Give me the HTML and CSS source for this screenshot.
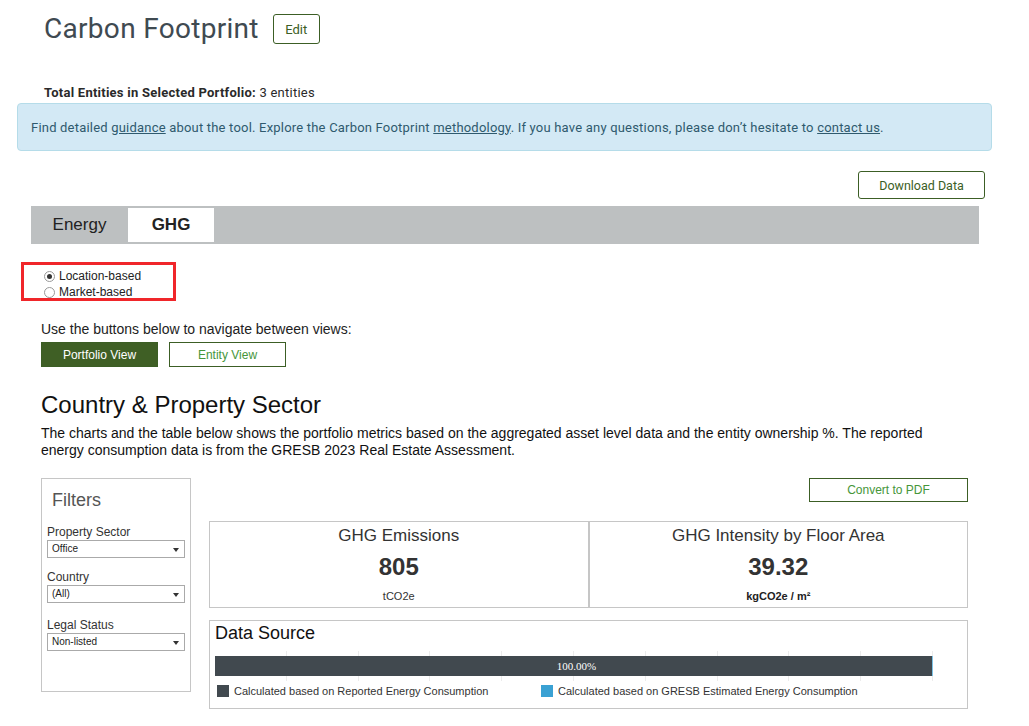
FILE: index.html
```html
<!DOCTYPE html>
<html lang="en">
<head>
  <meta charset="UTF-8" />
  <title>Carbon Footprint</title>
  <link rel="stylesheet" href="styles.css">
</head>
<body>
  <div class="page">
    <div class="page-header">
      <h1>Carbon Footprint</h1>
      <button class="btn-edit">Edit</button>
    </div>

    <div class="total-entities"><b>Total Entities in Selected Portfolio:</b> 3 entities</div>

    <div class="info-box">
      <span>Find detailed <a href="#">guidance</a> about the tool. Explore the Carbon Footprint <a href="#">methodology</a>. If you have any questions, please don’t hesitate to <a href="#">contact us</a>.</span>
    </div>

    <div class="download-row">
      <button class="btn-download">Download Data</button>
    </div>

    <div class="tabs">
      <div class="tab">Energy</div>
      <div class="tab active">GHG</div>
    </div>

    <div class="radio-box">
      <div class="radio-item"><span class="radio checked"></span>Location-based</div>
      <div class="radio-item"><span class="radio"></span>Market-based</div>
    </div>

    <div class="dashboard">
      <p class="nav-hint">Use the buttons below to navigate between views:</p>
      <div class="view-buttons">
        <button class="btn-view active">Portfolio View</button>
        <button class="btn-view">Entity View</button>
      </div>

      <h2>Country &amp; Property Sector</h2>
      <p class="desc">The charts and the table below shows the portfolio metrics based on the aggregated asset level data and the entity ownership %. The reported energy consumption data is from the GRESB 2023 Real Estate Assessment.</p>

      <div class="dash-body">
        <div class="filters">
          <div class="filters-title">Filters</div>
          <div class="filter">
            <div class="filter-label">Property Sector</div>
            <div class="select">Office<span class="caret"></span></div>
          </div>
          <div class="filter">
            <div class="filter-label">Country</div>
            <div class="select">(All)<span class="caret"></span></div>
          </div>
          <div class="filter last">
            <div class="filter-label">Legal Status</div>
            <div class="select">Non-listed<span class="caret"></span></div>
          </div>
        </div>

        <div class="charts">
          <div class="pdf-row">
            <button class="btn-pdf">Convert to PDF</button>
          </div>
          <div class="kpis">
            <div class="kpi">
              <div class="kpi-title">GHG Emissions</div>
              <div class="kpi-value">805</div>
              <div class="kpi-unit">tCO2e</div>
            </div>
            <div class="kpi">
              <div class="kpi-title">GHG Intensity by Floor Area</div>
              <div class="kpi-value">39.32</div>
              <div class="kpi-unit bold">kgCO2e / m²</div>
            </div>
          </div>
          <div class="data-source">
            <div class="ds-title">Data Source</div>
            <div class="ds-chart">
              <div class="grid">
                <span></span><span></span><span></span><span></span><span></span>
                <span></span><span></span><span></span><span></span><span></span>
              </div>
              <div class="bar">
                <div class="bar-reported">100.00%</div>
                <div class="bar-estimated"></div>
              </div>
            </div>
            <div class="legend">
              <div class="legend-item"><span class="swatch dark"></span>Calculated based on Reported Energy Consumption</div>
              <div class="legend-item"><span class="swatch blue"></span>Calculated based on GRESB Estimated Energy Consumption</div>
            </div>
          </div>
        </div>
      </div>
    </div>
  </div>
</body>
</html>
```

FILE: styles.css
```css
* {
  box-sizing: border-box;
}

html, body {
  margin: 0;
  padding: 0;
  background: #fff;
  font-family: "Liberation Sans", Arial, sans-serif;
  color: #222;
}

button {
  font-family: inherit;
  background: #fff;
  cursor: pointer;
}

.page {
  width: 1029px;
  height: 726px;
  overflow: hidden;
}

/* header */
.page-header {
  display: flex;
  align-items: center;
  gap: 14px;
  padding: 14px 0 0 44px;
  height: 44px;
}

h1 {
  margin: 0;
  font-family: Roboto, "DejaVu Sans", sans-serif;
  font-weight: 400;
  font-size: 28px;
  letter-spacing: 0.3px;
  color: #3f4a51;
  line-height: 30px;
}

.btn-edit {
  height: 30px;
  width: 47px;
  border: 1px solid #3c5e25;
  border-radius: 3px;
  color: #3c5e25;
  font-family: Roboto, sans-serif;
  font-size: 13px;
  padding: 0;
}

.total-entities {
  margin: 42px 0 0 44px;
  font-family: Roboto, sans-serif;
  font-size: 13px;
  letter-spacing: 0.25px;
  line-height: 14px;
  color: #2a2a2a;
}

.info-box {
  margin: 3px 37px 0 17px;
  height: 48px;
  padding: 0 13px;
  display: flex;
  align-items: center;
  background: #d3e9f5;
  border: 1px solid #b5dce9;
  border-radius: 4px;
  font-family: Roboto, sans-serif;
  font-size: 13px;
  letter-spacing: 0.2px;
  color: #2f5a6e;
}

.info-box a {
  color: #2f5a6e;
  text-decoration: underline;
}

.download-row {
  display: flex;
  justify-content: flex-end;
  margin: 20px 44px 0 0;
}

.btn-download {
  width: 127px;
  height: 28px;
  border: 1px solid #3c5e25;
  border-radius: 3px;
  color: #3c5e25;
  font-family: Roboto, sans-serif;
  font-size: 12.5px;
  padding: 0;
}

/* tabs */
.tabs {
  display: flex;
  margin: 7px 50px 0 31px;
  height: 38px;
  background: #bdc0c1;
}

.tab {
  width: 97px;
  display: flex;
  align-items: center;
  justify-content: center;
  font-size: 17px;
  color: #222;
}

.tab.active {
  width: 86px;
  background: #fff;
  font-weight: bold;
  border-top: 2px solid #bdc0c1;
  border-bottom: 2px solid #bdc0c1;
}

/* red outlined radios */
.radio-box {
  margin: 18px 0 0 21px;
  width: 155px;
  height: 39px;
  border: 3px solid #f0262a;
  padding: 3px 0 0 20px;
}

.radio-item {
  display: flex;
  align-items: center;
  height: 16px;
  font-size: 12px;
  color: #222;
}

.radio {
  width: 11px;
  height: 11px;
  border: 1px solid #999;
  border-radius: 50%;
  margin-right: 4px;
  display: flex;
  align-items: center;
  justify-content: center;
  background: #fff;
}

.radio.checked::after {
  content: "";
  width: 5px;
  height: 5px;
  border-radius: 50%;
  background: #333;
}

/* dashboard */
.dashboard {
  padding: 20px 61px 0 41px;
}

.nav-hint {
  margin: 0;
  font-size: 14px;
  line-height: 16px;
  color: #222;
}

.view-buttons {
  display: flex;
  gap: 11px;
  margin-top: 5px;
}

.btn-view {
  width: 117px;
  height: 25px;
  border: 1px solid #3c5e25;
  color: #46963a;
  font-size: 12px;
  padding: 0;
}

.btn-view.active {
  background: #3f5f25;
  color: #fff;
}

h2 {
  margin: 24px 0 0 0;
  font-weight: 400;
  font-size: 24px;
  line-height: 28px;
  color: #111;
}

.desc {
  margin: 6px 0 0 0;
  font-size: 14px;
  line-height: 17px;
  color: #111;
}

.dash-body {
  display: flex;
  gap: 18px;
  margin-top: 19px;
}

.filters {
  width: 150px;
  height: 214px;
  border: 1px solid #c6c6c6;
  padding: 0 5px;
}

.filters-title {
  font-size: 18px;
  color: #555;
  margin: 10px 0 0 5px;
  line-height: 22px;
}

.filter {
  margin-top: 14px;
}

.filter + .filter {
  margin-top: 12px;
}

.filter.last {
  margin-top: 15px;
}

.filter-label {
  font-size: 12px;
  line-height: 14px;
  color: #333;
}

.select {
  position: relative;
  height: 18px;
  border: 1px solid #aaa;
  font-size: 10px;
  line-height: 16px;
  padding-left: 4px;
  color: #222;
  margin-top: 1px;
}

.caret {
  position: absolute;
  right: 5px;
  top: 7px;
  border-left: 3px solid transparent;
  border-right: 3px solid transparent;
  border-top: 4px solid #333;
}

.charts {
  width: 759px;
}

.pdf-row {
  display: flex;
  justify-content: flex-end;
}

.btn-pdf {
  width: 159px;
  height: 24px;
  border: 1px solid #3c5e25;
  color: #46963a;
  font-size: 12px;
  padding: 0;
}

.kpis {
  display: flex;
  margin-top: 19px;
  height: 87px;
  border: 1px solid #c6c6c6;
}

.kpi {
  flex: 1;
  text-align: center;
  color: #333;
}

.kpi + .kpi {
  border-left: 2px solid #c6c6c6;
}

.kpi-title {
  font-size: 17px;
  margin-top: 4px;
  line-height: 20px;
}

.kpi-value {
  font-size: 24px;
  font-weight: bold;
  margin-top: 7px;
  line-height: 28px;
}

.kpi-unit {
  font-size: 11px;
  margin-top: 9px;
  line-height: 13px;
}

.kpi-unit.bold {
  font-weight: bold;
  color: #222;
}

.data-source {
  margin-top: 12px;
  height: 89px;
  border: 1px solid #c6c6c6;
  padding: 0 5px;
}

.ds-title {
  font-size: 18px;
  color: #111;
  margin: 1px 0 0 0;
  line-height: 22px;
}

.ds-chart {
  position: relative;
  width: 718px;
  height: 30px;
  margin-top: 7px;
}

.grid {
  position: absolute;
  inset: 0;
  display: flex;
}

.grid span {
  flex: 1;
  border-right: 1px solid #ececec;
}

.bar {
  position: absolute;
  left: 0;
  right: 0;
  top: 5px;
  height: 20px;
  display: flex;
}

.bar-reported {
  flex: 1;
  background: #41494f;
  color: #fff;
  font-family: "Liberation Serif", serif;
  font-size: 11px;
  line-height: 20px;
  text-align: center;
  padding-left: 6px;
}

.bar-estimated {
  width: 1px;
  background: #7cc3e6;
}

.legend {
  display: flex;
  margin-top: 4px;
  padding-left: 2px;
}

.legend-item {
  display: flex;
  align-items: center;
  font-size: 11px;
  color: #333;
  width: 324px;
}

.swatch {
  width: 12px;
  height: 12px;
  margin-right: 5px;
}

.swatch.dark {
  background: #41494f;
}

.swatch.blue {
  background: #3aa1d3;
}
```
